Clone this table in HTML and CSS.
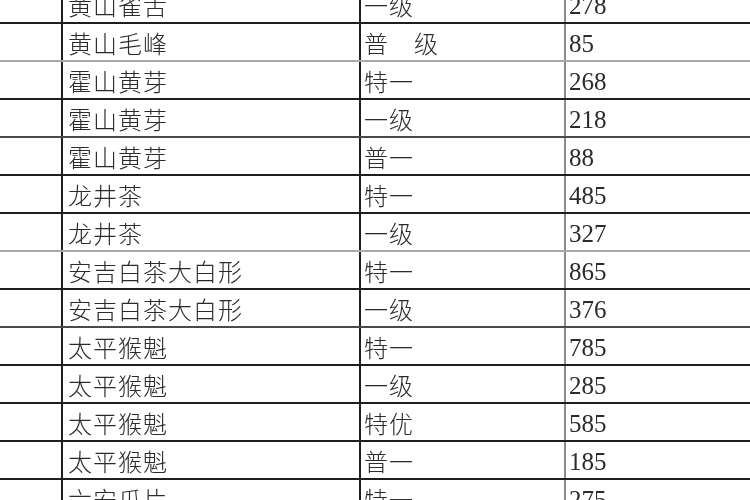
FILE: index.html
```html
<!DOCTYPE html>
<html lang="zh">
<head>
<meta charset="utf-8">
<title>茶叶价格表</title>
<link rel="stylesheet" href="styles.css">
</head>
<body>
<div class="sheet">
  <div class="row dark"><div class="c0"></div><div class="name">黄山雀舌</div><div class="grade">一级</div><div class="num">278</div></div>
  <div class="row light"><div class="c0"></div><div class="name">黄山毛峰</div><div class="grade">普　级</div><div class="num">85</div></div>
  <div class="row dark"><div class="c0"></div><div class="name">霍山黄芽</div><div class="grade">特一</div><div class="num">268</div></div>
  <div class="row mid"><div class="c0"></div><div class="name">霍山黄芽</div><div class="grade">一级</div><div class="num">218</div></div>
  <div class="row dark"><div class="c0"></div><div class="name">霍山黄芽</div><div class="grade">普一</div><div class="num">88</div></div>
  <div class="row dark"><div class="c0"></div><div class="name">龙井茶</div><div class="grade">特一</div><div class="num">485</div></div>
  <div class="row light"><div class="c0"></div><div class="name">龙井茶</div><div class="grade">一级</div><div class="num">327</div></div>
  <div class="row dark"><div class="c0"></div><div class="name">安吉白茶大白形</div><div class="grade">特一</div><div class="num">865</div></div>
  <div class="row mid"><div class="c0"></div><div class="name">安吉白茶大白形</div><div class="grade">一级</div><div class="num">376</div></div>
  <div class="row dark"><div class="c0"></div><div class="name">太平猴魁</div><div class="grade">特一</div><div class="num">785</div></div>
  <div class="row dark"><div class="c0"></div><div class="name">太平猴魁</div><div class="grade">一级</div><div class="num">285</div></div>
  <div class="row dark"><div class="c0"></div><div class="name">太平猴魁</div><div class="grade">特优</div><div class="num">585</div></div>
  <div class="row dark"><div class="c0"></div><div class="name">太平猴魁</div><div class="grade">普一</div><div class="num">185</div></div>
  <div class="row dark"><div class="c0"></div><div class="name">六安瓜片</div><div class="grade">特一</div><div class="num">275</div></div>
</div>
</body>
</html>
```
FILE: styles.css
```css
html, body {
  margin: 0;
  padding: 0;
  background: #fff;
  width: 750px;
  height: 500px;
  overflow: hidden;
}
.sheet {
  margin-top: -14px;
  font-family: "Liberation Serif", "Noto Sans CJK SC", serif;
  color: #2b2b2b;
  filter: blur(0.35px);
}
.row {
  display: grid;
  grid-template-columns: 63px 298px 205px 1fr;
  height: 36px;
  border-bottom: 2px solid #1e1e1e;
}
.row.light { border-bottom-color: #a8a8a8; }
.row.mid { border-bottom-color: #4a4a4a; }
.row > div {
  display: flex;
  align-items: center;
  white-space: nowrap;
}
.c0 { border-right: 2px solid #1e1e1e; }
.name {
  border-right: 2px solid #1e1e1e;
  padding-left: 5px;
  padding-top: 1px;
  font-size: 24px;
  letter-spacing: 1px;
  font-weight: 300;
}
.grade {
  border-right: 2px solid #8c8c8c;
  padding-left: 3px;
  padding-top: 1px;
  font-size: 24px;
  letter-spacing: 1px;
  font-weight: 300;
}
.num {
  padding-left: 3px;
  padding-top: 4px;
  font-size: 25px;
}
```
